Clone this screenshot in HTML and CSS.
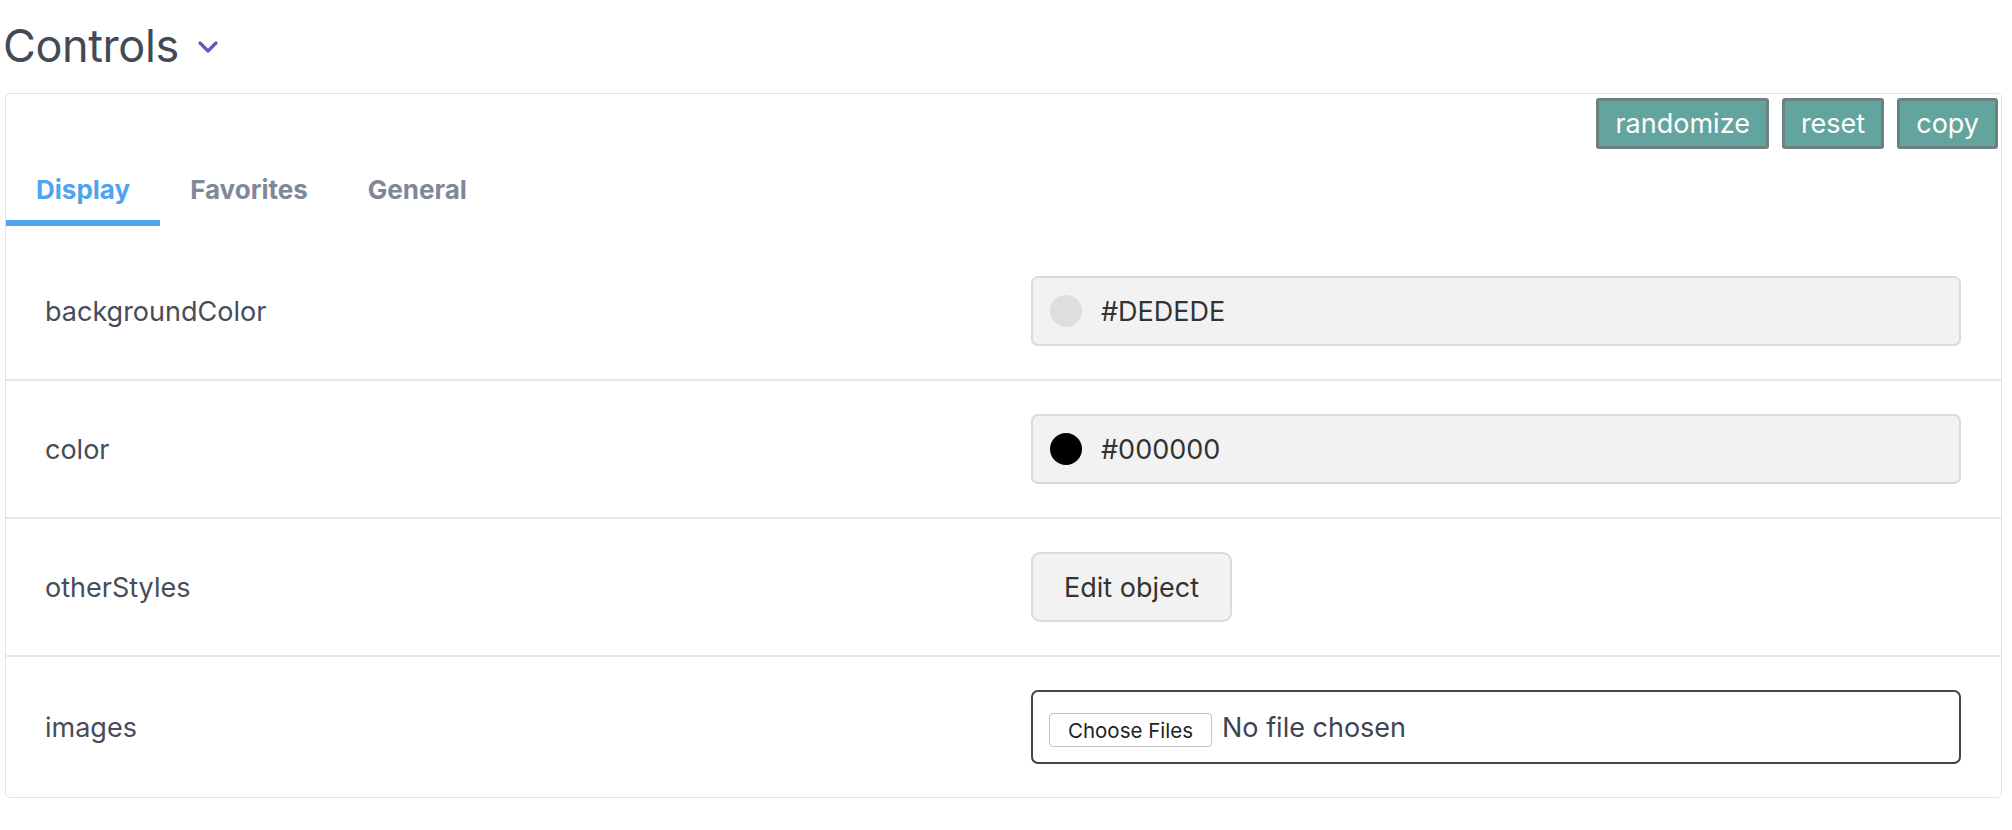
FILE: index.html
```html
<!DOCTYPE html>
<html lang="en">
<head>
<meta charset="utf-8">
<title>Controls</title>
<link rel="stylesheet" href="styles.css">
</head>
<body>
  <header class="title-bar">
    <h1 class="title">Controls</h1>
    <svg class="chevron" width="22" height="14" viewBox="0 0 22 14" aria-hidden="true">
      <polyline points="3,3 11,11 19,3" fill="none" stroke="#5a5fb4" stroke-width="3.2" stroke-linecap="round" stroke-linejoin="round"/>
    </svg>
  </header>

  <section class="card">
    <div class="actions">
      <button class="action-btn">randomize</button>
      <button class="action-btn">reset</button>
      <button class="action-btn">copy</button>
    </div>

    <nav class="tabs">
      <div class="tab active">Display</div>
      <div class="tab">Favorites</div>
      <div class="tab">General</div>
    </nav>

    <div class="rows">
      <div class="row">
        <div class="label">backgroundColor</div>
        <div class="control">
          <div class="color-field">
            <span class="swatch swatch-light"></span>
            <span class="color-value">#DEDEDE</span>
          </div>
        </div>
      </div>
      <div class="row">
        <div class="label">color</div>
        <div class="control">
          <div class="color-field">
            <span class="swatch swatch-dark"></span>
            <span class="color-value">#000000</span>
          </div>
        </div>
      </div>
      <div class="row">
        <div class="label">otherStyles</div>
        <div class="control">
          <button class="edit-btn">Edit object</button>
        </div>
      </div>
      <div class="row">
        <div class="label">images</div>
        <div class="control">
          <div class="file-field">
            <span class="file-btn">Choose Files</span>
            <span class="file-status">No file chosen</span>
          </div>
        </div>
      </div>
    </div>
  </section>
</body>
</html>
```

FILE: styles.css
```css
* { box-sizing: border-box; }

body {
  margin: 0;
  background: #ffffff;
  font-family: Inter, "Noto Sans", "Liberation Sans", sans-serif;
  color: #434955;
}

.title-bar {
  display: flex;
  align-items: flex-start;
  gap: 18px;
  padding: 18px 0 0 3px;
  height: 93px;
}

.title {
  margin: 0;
  font-size: 45px;
  font-weight: 400;
  line-height: 55px;
  color: #434955;
  letter-spacing: -0.4px;
}

.chevron {
  margin-top: 22px;
}

.card {
  margin: 0 10px 0 5px;
  border: 1px solid #e2e2e2;
  border-radius: 5px;
}

.actions {
  display: flex;
  justify-content: flex-end;
  gap: 13px;
  padding: 4px 3px 0 0;
}

.action-btn {
  height: 51px;
  padding: 0 16px;
  background: #64a49e;
  border: 3px solid #6d8081;
  border-radius: 3px;
  color: #ffffff;
  font-family: Inter, "Noto Sans", "Liberation Sans", sans-serif;
  font-size: 27px;
  line-height: 1;
}

.tabs {
  display: flex;
  padding-top: 25px;
}

.tab {
  padding: 0 30px 14px;
  font-size: 26px;
  font-weight: 700;
  line-height: 32px;
  color: #7f8898;
  border-bottom: 6px solid transparent;
}

.tab.active {
  color: #4fa3ef;
  border-bottom-color: #4fa3ef;
}

.rows {
  padding-top: 17px;
}

.row {
  display: grid;
  grid-template-columns: 1fr 1fr;
  column-gap: 56px;
  align-items: center;
  padding: 33px 40px 33px 39px;
}

.row + .row {
  border-top: 2px solid #e7e7e7;
}

.label {
  font-size: 27px;
  color: #464c58;
}

.control {
  display: flex;
}

.color-field {
  flex: 1;
  display: flex;
  align-items: center;
  gap: 19px;
  height: 70px;
  padding: 0 17px;
  background: #f2f2f2;
  border: 2px solid #dadada;
  border-radius: 7px;
}

.swatch {
  width: 32px;
  height: 32px;
  border-radius: 50%;
}

.swatch-light { background: #dedede; }
.swatch-dark { background: #000000; }

.color-value {
  font-size: 27px;
  color: #333333;
}

.edit-btn {
  width: 201px;
  height: 70px;
  background: #f2f2f2;
  border: 2px solid #dadada;
  border-radius: 9px;
  font-family: Inter, "Noto Sans", "Liberation Sans", sans-serif;
  font-size: 27px;
  color: #333333;
}

.file-field {
  flex: 1;
  display: flex;
  align-items: center;
  gap: 10px;
  height: 74px;
  padding: 0 16px;
  background: #ffffff;
  border: 2px solid #3f4452;
  border-radius: 7px;
}

.file-btn {
  display: flex;
  align-items: center;
  justify-content: center;
  width: 163px;
  height: 34px;
  margin-top: 6px;
  border: 1px solid #c4c4c4;
  border-radius: 4px;
  background: #ffffff;
  font-size: 20.5px;
  color: #222222;
}

.file-status {
  font-size: 27px;
  color: #3f4452;
}
```
